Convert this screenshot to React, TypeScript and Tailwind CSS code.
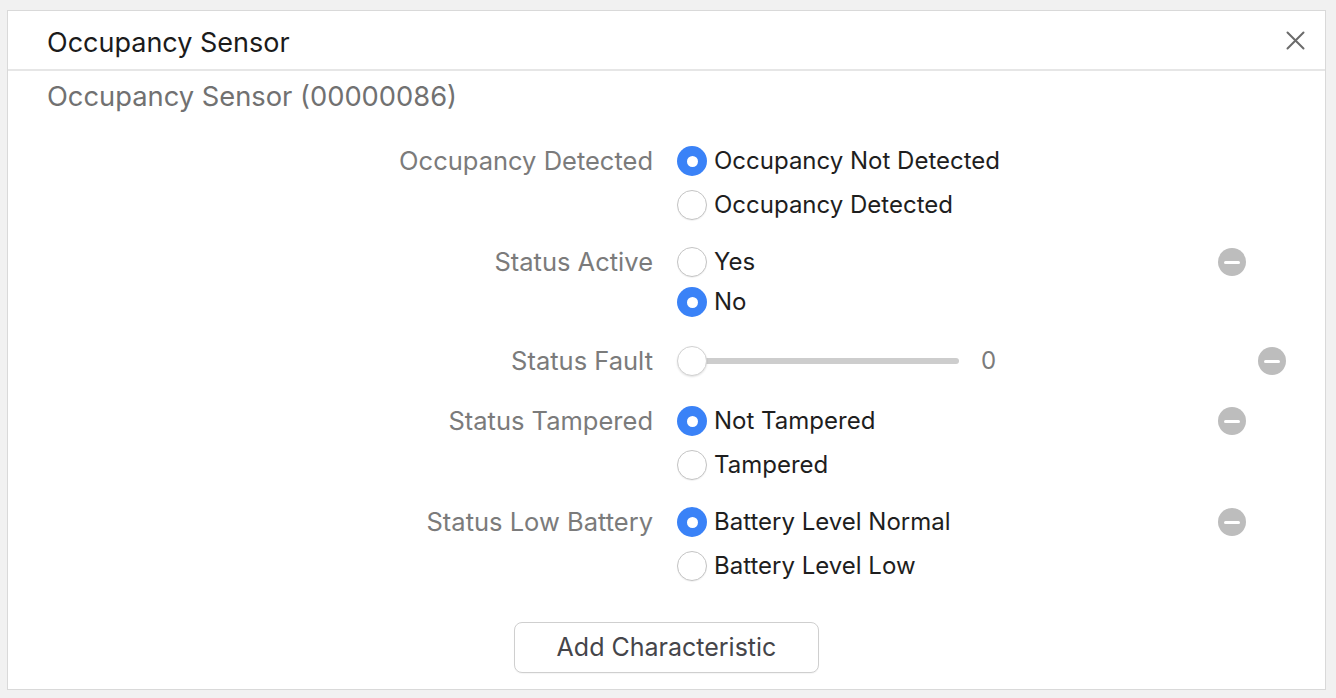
import React from 'react';

type Option = { label: string; checked: boolean };

const font = { fontFamily: 'Inter, "Noto Sans", sans-serif' };

function Radio({ checked }: { checked: boolean }) {
  if (checked) {
    return (
      <span className="flex h-[30px] w-[30px] shrink-0 items-center justify-center rounded-full bg-[#3a82f7]">
        <span className="h-[11px] w-[11px] rounded-full bg-white" />
      </span>
    );
  }
  return (
    <span className="h-[30px] w-[30px] shrink-0 rounded-full border border-[#c4c4c4] bg-white shadow-[0_1px_1px_rgba(0,0,0,0.06)]" />
  );
}

function MinusButton({ className }: { className: string }) {
  return (
    <span className={`flex h-[28px] w-[28px] shrink-0 items-center justify-center rounded-full bg-[#bdbdbd] ${className}`}>
      <span className="h-[3px] w-[16px] rounded-full bg-white" />
    </span>
  );
}

function RadioRow({
  label,
  options,
  rowH,
  minus,
  className,
}: {
  label: string;
  options: Option[];
  rowH: string;
  minus?: string;
  className: string;
}) {
  return (
    <div className={`flex items-start ${className}`}>
      <div className={`w-[645px] shrink-0 flex items-center justify-end text-[25.5px] text-[#7b7b7b] ${rowH}`}>
        {label}
      </div>
      <div className="ml-[24px] flex flex-1 flex-col">
        {options.map((o) => (
          <div key={o.label} className={`flex items-center gap-[7px] text-[24px] text-[#1e1e1e] ${rowH}`}>
            <Radio checked={o.checked} />
            <span>{o.label}</span>
          </div>
        ))}
      </div>
      {minus && <div className={`flex items-center ${rowH}`}><MinusButton className={minus} /></div>}
    </div>
  );
}

export default function App() {
  return (
    <div className="h-[698px] w-full bg-[#f1f1f1] pl-[7px] pr-[10px] pt-[10px]" style={font}>
      <div className="flex h-[680px] flex-col border border-[#d9d9d9] bg-white">
        {/* Header */}
        <div className="flex h-[60px] shrink-0 items-center justify-between border-b-2 border-[#e6e6e6] pl-[39px] pr-[20px]">
          <span className="pt-[6px] text-[27px] text-[#1b1b1b]">Occupancy Sensor</span>
          <svg width="19" height="19" viewBox="0 0 19 19" className="text-[#6b6b6b]">
            <path d="M1.5 1.5 L17.5 17.5 M17.5 1.5 L1.5 17.5" stroke="currentColor" strokeWidth="2" strokeLinecap="round" />
          </svg>
        </div>

        <div className="mt-[9px] h-[34px] pl-[39px] text-[27.3px] leading-[34px] text-[#717171]">
          Occupancy Sensor (00000086)
        </div>

        <RadioRow
          className="mt-[25px]"
          label="Occupancy Detected"
          rowH="h-[44px]"
          options={[
            { label: 'Occupancy Not Detected', checked: true },
            { label: 'Occupancy Detected', checked: false },
          ]}
        />
        <RadioRow
          className="mt-[15px]"
          label="Status Active"
          rowH="h-[40px]"
          minus="mr-[79px]"
          options={[
            { label: 'Yes', checked: false },
            { label: 'No', checked: true },
          ]}
        />

        {/* Slider row */}
        <div className="mt-[17px] flex h-[44px] items-center">
          <div className="w-[645px] shrink-0 text-right text-[25.5px] text-[#7b7b7b]">Status Fault</div>
          <div className="ml-[24px] flex flex-1 items-center">
            <div className="relative flex h-[30px] w-[282px] items-center">
              <div className="ml-[15px] h-[6px] flex-1 rounded-full bg-[#cdcdcd]" />
              <span className="absolute left-0 top-0 h-[30px] w-[30px] rounded-full border border-[#d2d2d2] bg-white shadow-[0_1px_2px_rgba(0,0,0,0.12)]" />
            </div>
            <span className="ml-[22px] text-[24px] text-[#7b7b7b]">0</span>
          </div>
          <MinusButton className="mr-[39px]" />
        </div>

        <RadioRow
          className="mt-[16px]"
          label="Status Tampered"
          rowH="h-[44px]"
          minus="mr-[79px]"
          options={[
            { label: 'Not Tampered', checked: true },
            { label: 'Tampered', checked: false },
          ]}
        />
        <RadioRow
          className="mt-[13px]"
          label="Status Low Battery"
          rowH="h-[44px]"
          minus="mr-[79px]"
          options={[
            { label: 'Battery Level Normal', checked: true },
            { label: 'Battery Level Low', checked: false },
          ]}
        />

        <button className="mx-auto mt-[34px] h-[51px] w-[305px] rounded-[8px] border border-[#cfcfcf] bg-white text-[25px] text-[#45454a] shadow-[0_1px_1px_rgba(0,0,0,0.04)]">
          Add Characteristic
        </button>
      </div>
    </div>
  );
}
